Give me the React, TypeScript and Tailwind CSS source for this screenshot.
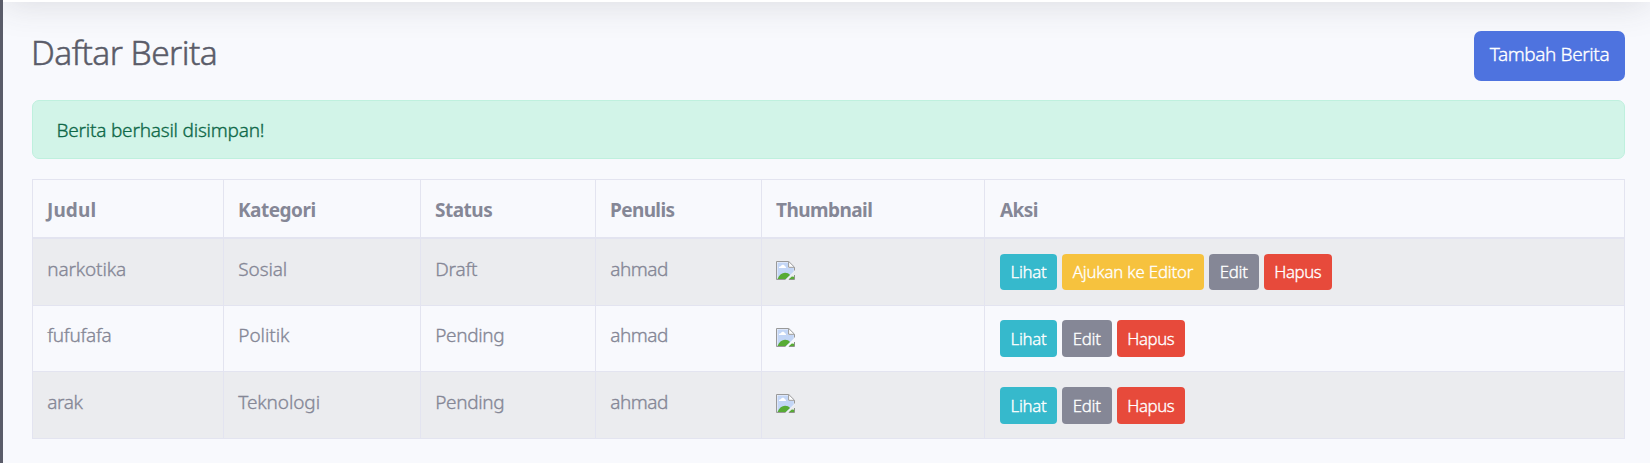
type Label = { text: string; className: string };

const lihat: Label = { text: "Lihat", className: "w-[57px] bg-[#36b9cc] tracking-[-0.25px]" };
const ajukan: Label = { text: "Ajukan ke Editor", className: "w-[142px] bg-[#f6c23e] tracking-[-0.16px]" };
const edit: Label = { text: "Edit", className: "w-[49.5px] bg-[#858796] tracking-[-0.2px]" };
const hapus: Label = { text: "Hapus", className: "w-[68.5px] bg-[#e74a3b] tracking-[-0.37px]" };

const headers: Label[] = [
  { text: "Judul", className: "tracking-[0.1px]" },
  { text: "Kategori", className: "tracking-[-0.5px]" },
  { text: "Status", className: "tracking-[-0.5px]" },
  { text: "Penulis", className: "tracking-[-0.62px]" },
  { text: "Thumbnail", className: "tracking-[-0.55px]" },
  { text: "Aksi", className: "tracking-[-0.6px]" },
];

const ahmad: Label = { text: "ahmad", className: "tracking-[-0.5px]" };
const pending: Label = { text: "Pending", className: "tracking-[-0.35px]" };

type Row = { cells: Label[]; actions: Label[]; row: string; pad: string; button: string };

const rows: Row[] = [
  {
    cells: [
      { text: "narkotika", className: "tracking-[-0.15px]" },
      { text: "Sosial", className: "tracking-[-0.1px]" },
      { text: "Draft", className: "tracking-[-0.2px]" },
      ahmad,
    ],
    actions: [lihat, ajukan, edit, hapus],
    row: "h-[67px] bg-[#ebecef]",
    pad: "pt-[15px]",
    button: "h-[36px] leading-[35.5px]",
  },
  {
    cells: [
      { text: "fufufafa", className: "tracking-[-0.3px]" },
      { text: "Politik", className: "tracking-[-0.05px]" },
      pending,
      ahmad,
    ],
    actions: [lihat, edit, hapus],
    row: "h-[66px]",
    pad: "pt-[14px]",
    button: "h-[37px] leading-[37.5px]",
  },
  {
    cells: [
      { text: "arak", className: "tracking-[-0.4px]" },
      { text: "Teknologi", className: "tracking-[-0.1px]" },
      pending,
      ahmad,
    ],
    actions: [lihat, edit, hapus],
    row: "h-[67px] bg-[#ebecef]",
    pad: "pt-[15px]",
    button: "h-[37px] leading-[37px]",
  },
];

function BrokenImage() {
  return (
    <svg width="19" height="19" viewBox="0 0 19 19" className="block">
      <path d="M.5.5H13L18.5 6V10.5L10 18.5H.5Z" fill="#f4f7fd" />
      <path d="M1.5 1.5H12V7H17.8V10.5L10 18H1.5Z" fill="#c3d6f6" />
      <path d="M3 7C2.6 5.8 4 5 5 5.3 5.6 3.2 8.2 3.4 8.8 5.2 10 5.2 10.2 6.4 9.8 7Z" fill="#fff" />
      <path d="M1.5 18C3.2 14 6 11.8 9 11.8 11.4 11.8 12.8 12.6 14 14L9.8 18Z" fill="#57ab35" />
      <path d="M13 18 15.8 15.4 18 15.8V18Z" fill="#57ab35" />
      <path d="M12.8 1V6.2H18Z" fill="#fff" />
      <path d="M9.6 18.5H.5V.5H12.8L18.5 6.2V9.5M12.6.8V6.3H18" fill="none" stroke="#999" />
      <path d="M12.8 18.5H18.5V14" fill="none" stroke="#8c9488" />
    </svg>
  );
}

export default function App() {
  return (
    <div className="flex h-[463px] w-[1650px] overflow-hidden bg-[#f8f9fd] font-['Noto_Sans',sans-serif] text-[19px] font-light leading-[30px] text-[#858796]">
      <div className="w-[3px] shrink-0 bg-[#5a5c69]" />
      <div className="flex min-w-0 flex-1 flex-col overflow-hidden">
        <div className="-mt-[86px] h-[88px] shrink-0 bg-white shadow-[0_3px_35px_0_rgba(58,59,69,0.15)]" />
        <main className="pl-[29px] pr-[25px] pt-[29px] [-webkit-text-stroke:0.35px_currentColor]">
          <div className="flex h-[50px] items-start justify-between">
            <h1 className="-ml-px text-[33.5px] leading-[42px] tracking-[-0.55px] text-[#5a5c69] [-webkit-text-stroke:0.5px_currentColor]">
              Daftar Berita
            </h1>
            <button className="flex h-[50px] w-[151px] items-center justify-center whitespace-nowrap rounded-[7px] bg-[#4e73df] pb-[4px] tracking-[-0.4px] text-white">
              Tambah Berita
            </button>
          </div>
          <div className="mt-[19px] h-[59px] rounded-[7px] border border-[#bff0de] bg-[#d2f4e8] pl-[23.5px] pt-[14px] tracking-[-0.22px] text-[#0f6848]">
            Berita berhasil disimpan!
          </div>
          <table className="mt-[20px] w-[1593px] table-fixed border-separate border-spacing-0 border-l border-t border-[#e3e4f0] text-left">
            <colgroup>
              <col className="w-[191px]" />
              <col className="w-[197px]" />
              <col className="w-[175px]" />
              <col className="w-[166px]" />
              <col className="w-[223px]" />
              <col className="w-[640px]" />
            </colgroup>
            <thead>
              <tr className="h-[59px]">
                {headers.map((h) => (
                  <th
                    key={h.text}
                    className={`border-b-2 border-r border-[#e3e4f0] pb-0 pl-[14px] pt-[15px] align-top font-bold [-webkit-text-stroke:0] last:pl-[15px] ${h.className}`}
                  >
                    {h.text}
                  </th>
                ))}
              </tr>
            </thead>
            <tbody>
              {rows.map((r) => (
                <tr key={r.cells[0].text} className={r.row}>
                  {r.cells.map((c, i) => (
                    <td key={i} className={`border-b border-r border-[#e3e4f0] pl-[14.25px] align-top ${r.pad} ${c.className}`}>
                      {c.text}
                    </td>
                  ))}
                  <td className="border-b border-r border-[#e3e4f0] pl-[14px] pt-[22px] align-top">
                    <BrokenImage />
                  </td>
                  <td className={`border-b border-r border-[#e3e4f0] pl-[15px] align-top ${r.pad}`}>
                    <div className="flex gap-[5px]">
                      {r.actions.map((a) => (
                        <button
                          key={a.text}
                          className={`whitespace-nowrap rounded-[4px] text-center text-[16.8px] text-white ${r.button} ${a.className}`}
                        >
                          {a.text}
                        </button>
                      ))}
                    </div>
                  </td>
                </tr>
              ))}
            </tbody>
          </table>
        </main>
      </div>
    </div>
  );
}
